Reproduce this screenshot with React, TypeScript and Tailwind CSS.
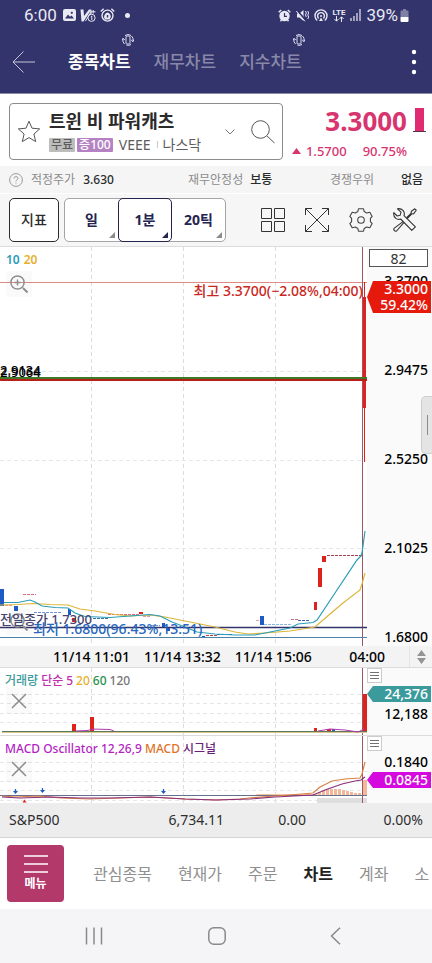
import type { ReactNode } from "react";

interface Candle {
    x: number;
    y: number;
    w: number;
    h: number;
    up: boolean;
}

const RED = "#dd231c";
const BLUE = "#1d5cc4";

const candles: Candle[] = [
    { x: 0, y: 589, w: 4, h: 17, up: false },
    { x: 14, y: 606, w: 4, h: 5, up: false },
    { x: 68, y: 609, w: 3, h: 6, up: false },
    { x: 72, y: 618, w: 4, h: 4, up: true },
    { x: 139, y: 612, w: 4, h: 2, up: true },
    { x: 162, y: 623, w: 3, h: 5, up: false },
    { x: 166, y: 627, w: 4, h: 4, up: false },
    { x: 202, y: 636, w: 3, h: 2, up: false },
    { x: 260, y: 616, w: 4, h: 9, up: false },
    { x: 314, y: 602, w: 3, h: 8, up: true },
    { x: 318, y: 568, w: 4, h: 19, up: true },
    { x: 322, y: 556, w: 4, h: 6, up: true },
    { x: 363, y: 297, w: 3, h: 111, up: true },
];

// 거래가 없는 구간 [x1, x2, y, color]
const flats: [number, number, number, string][] = [
    [23, 36, 594.5, "#d9707a"],
    [5, 13, 605.5, "#d9a0a0"],
    [34, 62, 612.5, "#6f92d8"],
    [93, 108, 618.5, "#35709f"],
    [108, 139, 614.5, "#d9707a"],
    [143, 150, 616.5, "#d9a0a0"],
    [151, 160, 625.5, "#6f92d8"],
    [206, 217, 635.5, "#b0404a"],
    [217, 232, 634.5, "#2a5aa5"],
    [256, 260, 620.5, "#e0a0a0"],
    [264, 291, 624.5, "#8ab8d8"],
    [291, 298, 619.5, "#c0708a"],
    [298, 309, 620.5, "#4060b0"],
    [327, 362, 555.5, "#a04050"],
];

const volumes: Candle[] = [
    { x: 72, y: 724, w: 4, h: 7, up: true },
    { x: 90, y: 717, w: 4, h: 14, up: true },
    { x: 314, y: 728, w: 3, h: 4, up: true },
    { x: 327, y: 729, w: 4, h: 3, up: true },
    { x: 332, y: 729, w: 3, h: 3, up: false },
    { x: 363, y: 694, w: 4, h: 39, up: true },
];

const oscillator = [1, 3, 5, 6, 6, 6, 6, 5, 4, 3, 2, 2];

const prices = ["3.3700", "2.9475", "2.5250", "2.1025", "1.6800"];

const subTabs = ["관심종목", "현재가", "주문", "차트", "계좌", "소"];

const Vertical = ({ top, bottom }: { top: number; bottom: number }) => (
    <path
        d={`M91.5 ${top}V${bottom}M183.5 ${top}V${bottom}M275.5 ${top}V${bottom}`}
        stroke="#dcdcdc"
        strokeDasharray="4 3"
        fill="none"
    />
);

const Rotate = () => (
    <svg width="12" height="12" viewBox="0 0 12 12" fill="none" stroke="#dcdcec" aria-hidden="true">
        <rect x="4" y="2" width="4" height="8" rx="1" />
        <path d="M2.5 10A5 5 0 0 1 1 5M3 1.5A5.4 5.4 0 0 1 9 1.5M9.5 2A5 5 0 0 1 11 7M9 10.5A5.4 5.4 0 0 1 4.5 11.2" />
        <path d="M0 6.5L1 4.2L2.8 6M12 5.5L11 7.8L9.2 6" />
    </svg>
);

const StatusBar = () => (
    <div className="flex h-[30px] items-center justify-between pl-6 pr-[23px] font-[Roboto,sans-serif] text-[17px] leading-none text-[#e9e9f4]">
        <div className="flex items-center gap-1">
            <span className="mr-[2px]">6:00</span>
            <svg width="13" height="12" viewBox="0 0 13 12" aria-hidden="true">
                <rect width="13" height="12" rx="2" fill="#e9e9f4" />
                <path d="M2 9.5L5 5.5L7 7.8L8.6 6.4L11 9.5Z" fill="#33346b" />
                <circle cx="8.8" cy="3.8" r="1.1" fill="#33346b" />
            </svg>
            <svg width="16" height="13" viewBox="0 0 16 13" fill="none" stroke="#e9e9f4" aria-hidden="true">
                <path d="M0.5 0.5H3.5L4 7L9 0.5H11.5L3.5 12.5H1.5Z" fill="#e9e9f4" stroke="none" />
                <path d="M5.5 12L11 3M11 1V5M13.2 1V4.5M10.5 2.8H15.5" />
                <circle cx="11.5" cy="8.8" r="3.6" />
                <path d="M10.8 7.8L11.8 7V11" />
            </svg>
            <svg width="15" height="14" viewBox="0 0 15 14" fill="none" stroke="#e9e9f4" strokeWidth="1.4" aria-hidden="true">
                <circle cx="7.5" cy="7.6" r="5.5" />
                <path d="M0.8 3.4L3.6 0.8M14.2 3.4L11.4 0.8" />
                <path d="M4 9Q4.5 5 7.5 4.4Q10.5 5 10.8 9L9.5 11.5H5Z" fill="#e9e9f4" stroke="none" />
                <path d="M7.5 7V9.5" stroke="#33346b" />
            </svg>
            <span className="ml-[6px] size-[5px] rounded-full bg-[#e9e9f4]" />
        </div>
        <div className="flex items-center gap-[5px]">
            <svg width="13" height="13" viewBox="0 0 13 13" aria-hidden="true">
                <circle cx="6.5" cy="7" r="5.2" fill="#e9e9f4" />
                <path d="M0.7 3.2L3.2 1M12.3 3.2L9.8 1M2.5 12.2L3.5 11M10.5 12.2L9.5 11" stroke="#e9e9f4" strokeWidth="1.5" />
                <path d="M6.5 4V7.4H9" fill="none" stroke="#33346b" strokeWidth="1.2" />
            </svg>
            <svg width="13" height="13" viewBox="0 0 13 13" aria-hidden="true">
                <path d="M1 4.5H3.5L7.5 1V12L3.5 8.5H1Z" fill="#e9e9f4" />
                <path d="M0.5 0.8L10 12" stroke="#33346b" strokeWidth="2" />
                <path d="M0.3 2L9 12.3M9.5 2L10.3 4L9.5 6L10.3 8M11.8 2L12.6 4L11.8 6L12.6 8L11.8 10" fill="none" stroke="#e9e9f4" />
            </svg>
            <svg width="14" height="13" viewBox="0 0 14 13" fill="none" stroke="#e9e9f4" strokeWidth="1.4" aria-hidden="true">
                <path d="M3.2 11.5A6 6 0 1 1 10.8 11.5M4.6 9.4A3.4 3.4 0 1 1 9.4 9.4" />
                <circle cx="7" cy="7" r="1" fill="#e9e9f4" stroke="none" />
                <path d="M5 12L7 8.6L9 12Z" fill="#e9e9f4" stroke="none" />
            </svg>
            <span className="flex flex-col items-center text-[8px] font-bold leading-[7px]">
                LTE
                <svg width="10" height="6" viewBox="0 0 10 6" fill="none" stroke="#e9e9f4" aria-hidden="true">
                    <path d="M2.5 0V5M0.5 3L2.5 5.2L4.5 3M7.5 6V1M5.5 3L7.5 0.8L9.5 3" />
                </svg>
            </span>
            <svg width="11" height="12" viewBox="0 0 11 12" stroke="#e9e9f4" strokeWidth="1.2" aria-hidden="true">
                <path d="M1 9V12M4 7V12M7 4V12M10 0V12" />
            </svg>
            <span className="flex items-center gap-[2px]">
                39%
                <svg width="9" height="13" viewBox="0 0 9 13" aria-hidden="true">
                    <path d="M3 0H6V1.5H7.5Q8.5 1.5 8.5 2.5V8H0.5V2.5Q0.5 1.5 1.5 1.5H3Z" fill="#8080a6" />
                    <path d="M0.5 8H8.5V12Q8.5 13 7.5 13H1.5Q0.5 13 0.5 12Z" fill="#ffffff" />
                </svg>
            </span>
        </div>
    </div>
);

const Header = () => (
    <header className="border-b border-[#8a8aa5] bg-[#33346b]">
        <StatusBar />
        <nav className="flex h-[63px] items-center pl-3 pr-[15px] text-[17px] font-medium leading-6 text-[#8988a8]">
            <button aria-label="뒤로" className="mr-[33px]">
                <svg width="23" height="22" viewBox="0 0 23 22" fill="none" stroke="#c4c4d8" aria-hidden="true">
                    <path d="M11.5 0.5L1 11L11.5 21.5M1 11H23" />
                </svg>
            </button>
            <button className="relative mr-[23px] font-bold text-white">
                종목차트
                <span className="absolute -right-[3px] -top-4"><Rotate /></span>
            </button>
            <button className="mr-[23px]">재무차트</button>
            <button className="relative">
                지수차트
                <span className="absolute -right-[3px] -top-4"><Rotate /></span>
            </button>
            <button aria-label="더보기" className="ml-auto">
                <svg width="6" height="26" viewBox="0 0 6 26" fill="#ffffff" aria-hidden="true">
                    <circle cx="3" cy="3" r="2.2" />
                    <circle cx="3" cy="13" r="2.2" />
                    <circle cx="3" cy="23" r="2.2" />
                </svg>
            </button>
        </nav>
    </header>
);

const Quote = () => (
    <section className="flex justify-between bg-white pb-[3px] pl-[9px] pr-[6px] pt-[9px]">
        <div className="flex h-[57px] w-[274px] items-center rounded-[4px] border border-[#8c8c8c] px-[7px]">
            <button aria-label="관심종목 등록">
                <svg width="24" height="23" viewBox="0 0 23 23" fill="none" stroke="#555555" aria-hidden="true">
                    <path d="M11.5 1.2L14.5 8.2L22.2 8.9L16.4 14L18.2 21.6L11.5 17.6L4.8 21.6L6.6 14L0.8 8.9L8.5 8.2Z" />
                </svg>
            </button>
            <div className="ml-2 flex flex-col gap-[2px]">
                <h1 className="text-lg font-bold leading-6 text-[#2b2b2b]">트윈 비 파워캐츠</h1>
                <div className="flex items-center text-sm leading-5 text-[#5c5c5c]">
                    <span className="mr-[2px] rounded-[1px] bg-[#bdbdbd] px-[2px] text-xs font-medium leading-[14px] text-[#5c5c5c]">무료</span>
                    <span className="mr-[6px] rounded-[1px] bg-[#b583c4] px-[2px] text-xs font-medium leading-[14px] text-white">증100</span>
                    VEEE
                    <span className="ml-[6px] mr-[5px] h-[7px] w-px bg-[#c8c8c8]" />
                    나스닥
                </div>
            </div>
            <button aria-label="종목 목록" className="ml-auto mr-4">
                <svg width="10" height="6" viewBox="0 0 10 6" fill="none" stroke="#777777" aria-hidden="true">
                    <path d="M0.5 0.5L5 5L9.5 0.5" />
                </svg>
            </button>
            <button aria-label="검색">
                <svg width="24" height="24" viewBox="0 0 24 24" fill="none" stroke="#555555" aria-hidden="true">
                    <circle cx="9.5" cy="9.5" r="8.8" />
                    <path d="M16 16L23.5 23" />
                </svg>
            </button>
        </div>
        <div className="flex gap-[6px] text-[#d8346f]">
            <div className="flex flex-col items-end">
                <strong className="text-[26px] font-bold leading-9">3.3000</strong>
                <div className="flex items-center text-[13px] font-medium leading-6">
                    <svg width="9" height="6" viewBox="0 0 9 6" fill="#d8346f" aria-hidden="true" className="mr-[5px]">
                        <path d="M4.5 0L9 6H0Z" />
                    </svg>
                    <span className="mr-4">1.5700</span>
                    <span>90.75%</span>
                </div>
            </div>
            <svg width="13" height="25" viewBox="0 0 13 25" aria-hidden="true" className="mt-[5px]">
                <path d="M2 0H11V23H2Z" fill="#e02b72" />
                <path d="M0 23.5H13" stroke="#55334a" />
            </svg>
        </div>
    </section>
);

const Facts = () => (
    <dl className="grid h-[27px] grid-cols-[179fr_142fr_93fr] items-center bg-[#f5f5f6] px-[9px] text-xs leading-5 text-[#2b2b2b]">
        <div className="flex gap-2">
            <dt className="flex items-center gap-2 text-[#8c8c8c]">
                <svg width="14" height="14" viewBox="0 0 14 14" fill="none" stroke="#9a9a9a" aria-hidden="true">
                    <circle cx="7" cy="7" r="6.4" />
                    <path d="M5 5.5Q5 3.6 7 3.6Q9 3.6 9 5.3Q9 6.3 7.8 6.9Q7 7.3 7 8.4M7 9.6V10.6" />
                </svg>
                적정주가
            </dt>
            <dd className="font-medium">3.630</dd>
        </div>
        <div className="flex gap-[7px]">
            <dt className="text-[#8c8c8c]">재무안정성</dt>
            <dd className="font-medium">보통</dd>
        </div>
        <div className="flex justify-between">
            <dt className="text-[#8c8c8c]">경쟁우위</dt>
            <dd className="font-medium">없음</dd>
        </div>
    </dl>
);

const Corner = ({ color }: { color: string }) => (
    <svg width="6" height="6" viewBox="0 0 6 6" fill={color} aria-hidden="true" className="absolute bottom-[3px] right-[3px]">
        <path d="M6 0V6H0Z" />
    </svg>
);

const Toolbar = () => (
    <div className="flex h-[54px] items-center justify-between border-b border-t border-b-[#dcdcdc] border-t-white bg-[#f6f6f7] pl-[9px] pr-[15px] text-sm leading-5">
        <div className="flex">
            <button className="mr-[5px] h-11 w-[50px] rounded-[5px] border border-[#2b2b2b] bg-white font-medium text-[#2b2b2b]">지표</button>
            <div className="flex h-11 rounded-[5px] border border-[#a5a5a5] bg-white font-bold text-[#23244f]">
                <button className="relative w-[53px]">일<Corner color="#8c8c8c" /></button>
                <button className="relative -my-px w-[54px] rounded-[5px] border border-[#23244f]">1분<Corner color="#23244f" /></button>
                <button className="relative w-[53px]">20틱<Corner color="#8c8c8c" /></button>
            </div>
        </div>
        <div className="flex items-center gap-5">
            <button aria-label="분할 화면">
                <svg width="24" height="24" viewBox="0 0 24 24" fill="none" stroke="#333333" aria-hidden="true">
                    <path d="M0.5 0.5H10.5V10.5H0.5ZM13.5 0.5H23.5V10.5H13.5ZM0.5 13.5H10.5V23.5H0.5ZM13.5 13.5H23.5V23.5H13.5Z" />
                </svg>
            </button>
            <button aria-label="전체 화면">
                <svg width="24" height="24" viewBox="0 0 24 24" fill="none" stroke="#333333" aria-hidden="true">
                    <path d="M0.5 0.5L23.5 23.5M23.5 0.5L0.5 23.5M0.5 7V0.5H7M17 0.5H23.5V7M23.5 17V23.5H17M7 23.5H0.5V17" />
                </svg>
            </button>
            <button aria-label="설정">
                <svg width="24" height="24" viewBox="0 0 24 24" fill="none" stroke="#444444" strokeWidth="1.1" strokeLinejoin="round" aria-hidden="true">
                    <path d="M9.5 0.8H14.5L15.2 3.6L17.6 5L20.8 4.2L23.2 8.4L21.4 10.4V13.6L23.2 15.6L20.8 19.8L17.6 19L15.2 20.4L14.5 23.2H9.5L8.8 20.4L6.4 19L3.2 19.8L0.8 15.6L2.6 13.6V10.4L0.8 8.4L3.2 4.2L6.4 5L8.8 3.6Z" />
                    <circle cx="12" cy="12" r="3.3" />
                </svg>
            </button>
            <button aria-label="도구">
                <svg width="24" height="24" viewBox="0 0 24 24" fill="none" stroke="#333333" strokeWidth="1.1" strokeLinejoin="round" aria-hidden="true">
                    <path d="M4.5 0.8L8 4.2L7.2 7.2L4.2 8L0.8 4.6Q0.2 8.2 2.8 10.4Q5 12 7.6 11L18.8 22.4L22.4 18.8L11 7.6Q12 4.6 10 2.4Q7.8 0.2 4.5 0.8Z" />
                    <path d="M13.4 10L18 5.4L18.4 3.2L21.8 0.8L23.2 2.2L20.8 5.6L18.6 6L14.2 10.6M10 13.6L1 20.4Q0.4 21.6 1.4 22.6Q2.4 23.6 3.6 23L10.8 14.6" />
                </svg>
            </button>
        </div>
    </div>
);

const Magnifier = ({ plus }: { plus: boolean }) => (
    <svg width="18" height="18" viewBox="0 0 18 18" fill="none" stroke="#8f8f8f" strokeWidth="1.5" aria-hidden="true">
        <circle cx="7.5" cy="7.5" r="6.6" />
        <path d="M13 13L17.5 17.5" strokeWidth="2" />
        <path d={plus ? "M7.5 4.5V10.5M4.5 7.5H10.5" : "M4.5 7.5H10.5"} />
    </svg>
);

const PricePanel = () => (
    <div className="flex h-[399px]">
        <div className="relative min-w-0 flex-1 bg-white">
            <svg viewBox="0 247 367 399" preserveAspectRatio="none" className="h-full w-full" aria-hidden="true">
                <Vertical top={247} bottom={646} />
                <path d="M0 371.5H367M0 460.5H367M0 548.5H367" stroke="#e6e6e6" strokeDasharray="4 3" />
                <path d="M0 282.5H367" stroke="#e08a86" />
                <path d="M362.5 247V646" stroke="#a25560" />
                <path d="M364.5 282V462" stroke={RED} />
                {flats.map(([x1, x2, y, color]) => (
                    <path key={x1} d={`M${x1} ${y}H${x2}`} stroke={color} strokeDasharray="3 1" />
                ))}
                {candles.map((c) => (
                    <rect key={c.x} x={c.x} y={c.y} width={c.w} height={c.h} fill={c.up ? RED : BLUE} />
                ))}
                <path d="M0 627.5H367" stroke="#33346b" strokeWidth="1.5" />
                <path d="M0 637.5H367" stroke="#4d83a6" />
                <polyline
                    points="0,605 18,604.5 33,603.5 50,604.5 68,605 80,609 95,611 115,614.5 130,616 150,615 165,617 185,621 215,627 235,632 248,634 265,633 290,631 315,627 330,614 343,603 360,590 362,584 365,573"
                    fill="none"
                    stroke="#dcb53a"
                    strokeWidth="1.2"
                />
                <polyline
                    points="4,602.5 18,602.5 30,600 35,602 42,606 55,607.5 68,608 75,613 85,616.5 110,617.5 150,614.5 160,616 172,622 185,627 197,632 215,634 235,635 255,635 275,631 290,628 298,624 313,622.5 317,620 335,593 357,560 361,556 362,553 365,531"
                    fill="none"
                    stroke="#2a9db8"
                    strokeWidth="1.2"
                />
                <path d="M0 378H367" stroke="#3d7a2c" strokeWidth="2" />
                <path d="M0 380H367" stroke="#b81f17" strokeWidth="2" />
            </svg>
            <div className="absolute left-[6px] top-1 flex gap-1 text-xs font-semibold leading-[18px]">
                <span className="text-[#2a9db8]">10</span>
                <span className="text-[#e6b02e]">20</span>
            </div>
            <button aria-label="확대" className="absolute left-[6px] top-6 flex size-[26px] items-center justify-center bg-black/2">
                <Magnifier plus />
            </button>
            <button aria-label="축소" className="absolute bottom-[11px] left-[6px] flex size-[26px] items-center justify-center bg-black/2">
                <Magnifier plus={false} />
            </button>
            <span className="absolute right-1 top-[34px] whitespace-nowrap text-sm font-medium leading-5 text-[#cc2620]">최고 3.3700(−2.08%,04:00)</span>
            <span className="absolute left-0 top-[113px] text-[13px] font-medium leading-5 text-black">2.9134</span>
            <span className="absolute left-0 top-[115px] text-[13px] font-medium leading-5 text-black">2.9064</span>
            <span className="absolute bottom-[17px] left-0 whitespace-nowrap text-[13px] font-medium leading-5 text-[#45456f]">전일종가 1.7300</span>
            <span className="absolute bottom-[7px] left-[33px] whitespace-nowrap text-sm font-medium leading-5 text-[#2867bd]">최저 1.6800(96.43%,13:51)</span>
        </div>
        <div className="relative flex w-[65px] flex-col bg-[#fafafa] pr-1 text-right text-sm font-medium text-black">
            <input
                aria-label="봉 개수"
                defaultValue="82"
                className="ml-[2px] mt-[2px] h-[18px] w-[59px] shrink-0 border border-[#555555] bg-white text-center text-sm font-normal leading-4 text-[#333333]"
            />
            <div className="mt-[5px] flex flex-1 flex-col justify-between leading-[18px]">
                {prices.map((price) => (
                    <span key={price}>{price}</span>
                ))}
            </div>
            <div className="absolute right-px top-[34px] flex h-8 w-16 flex-col bg-[#e51a0d] pr-[3px] leading-4 text-white [clip-path:polygon(0_50%,6px_0,100%_0,100%_100%,6px_100%)]">
                <span>3.3000</span>
                <span>59.42%</span>
            </div>
            <button aria-label="패널 열기" className="absolute right-0 top-[149px] flex h-[58px] w-[11px] items-center justify-center rounded-l-[5px] border border-r-0 border-[#cfcfcf] bg-[#e4e4e4]">
                <span className="h-5 w-px bg-[#8c8c8c]" />
            </button>
        </div>
    </div>
);

const TimeAxis = () => (
    <div className="flex h-[21px] items-center bg-[#f3f3f3] pl-[53px] text-sm font-medium leading-5 text-black">
        <div className="flex gap-[14px] whitespace-nowrap">
            <span>11/14 11:01</span>
            <span>11/14 13:32</span>
            <span>11/14 15:06</span>
        </div>
        <span className="ml-auto mr-6">04:00</span>
        <button aria-label="차트 높이 조절" className="flex h-full w-[23px] items-center justify-center border-l border-[#e4e4e4]">
            <svg width="9" height="14" viewBox="0 0 9 14" fill="#949494" aria-hidden="true">
                <path d="M4.5 0L9 6H0ZM4.5 14L9 8H0Z" />
            </svg>
        </button>
    </div>
);

interface SubPanelProps {
    legend: ReactNode;
    drawing: ReactNode;
    children: ReactNode;
}

const SubPanel = ({ legend, drawing, children }: SubPanelProps) => (
    <div className="flex h-[68px] border-t border-[#dcdcdc]">
        <div className="relative min-w-0 flex-1 bg-white">
            {drawing}
            <div className="absolute left-[5px] top-1 flex gap-[3px] whitespace-nowrap text-xs font-medium leading-[18px]">{legend}</div>
            <button aria-label="지표 삭제" className="absolute left-[6px] top-5 flex size-[26px] items-center justify-center bg-black/2">
                <svg width="16" height="16" viewBox="0 0 16 16" stroke="#8c8c8c" strokeWidth="1.5" aria-hidden="true">
                    <path d="M1 1L15 15M15 1L1 15" />
                </svg>
            </button>
        </div>
        <div className="flex w-[65px] flex-col bg-[#fafafa] text-right text-sm font-medium text-black">
            <button aria-label="지표 메뉴" className="flex size-[15px] shrink-0 items-center justify-center border border-[#cccccc] bg-white">
                <svg width="9" height="9" viewBox="0 0 9 9" stroke="#707070" aria-hidden="true">
                    <path d="M0 1.5H9M0 4.5H9M0 7.5H9" />
                </svg>
            </button>
            {children}
        </div>
    </div>
);

const Tag = ({ className, children }: { className: string; children: ReactNode }) => (
    <span className={`mr-px h-4 pr-[3px] leading-4 text-white [clip-path:polygon(0_50%,6px_0,100%_0,100%_100%,6px_100%)] ${className}`}>
        {children}
    </span>
);

const VolumePanel = () => (
    <SubPanel
        legend={
            <>
                <span className="text-[#3b9a9b]">거래량</span>
                <span className="text-[#c22fb0]">단순</span>
                <span className="text-[#c22fb0]">5</span>
                <span className="text-[#e6b02e]">20</span>
                <span className="text-[#1f8f4a]">60</span>
                <span className="text-[#757575]">120</span>
            </>
        }
        drawing={
            <svg viewBox="0 668 367 67" preserveAspectRatio="none" className="h-full w-full" aria-hidden="true">
                <Vertical top={668} bottom={735} />
                <path d="M0 694.5H367M0 703.5H367M0 713.5H367M0 722.5H367" stroke="#e6e6e6" strokeDasharray="4 3" />
                <path d="M362.5 668V735" stroke="#a25560" />
                {volumes.map((v) => (
                    <rect key={v.x} x={v.x} y={v.y} width={v.w} height={v.h} fill={v.up ? RED : BLUE} />
                ))}
                <path d="M2 732.5H367" stroke="#d8c690" />
                <path d="M2 731.5H367" stroke="#5f7a5a" />
                <path d="M76 731L88 730.5L92 729L110 729.5L114 731M318 731L330 729L345 730L358 732L364 729" fill="none" stroke="#b03ab0" />
            </svg>
        }
    >
        <Tag className="mt-[3px] bg-[#3b9a9b]">24,376</Tag>
        <span className="mt-[2px] pr-1 leading-5">12,188</span>
    </SubPanel>
);

const MacdPanel = () => (
    <SubPanel
        legend={
            <>
                <span className="text-[#b41fc4]">MACD Oscillator 12,26,9</span>
                <span className="text-[#e0731f]">MACD</span>
                <span className="text-[#6b1f78]">시그널</span>
            </>
        }
        drawing={
            <svg viewBox="0 736 367 67" preserveAspectRatio="none" className="h-full w-full" aria-hidden="true">
                <Vertical top={736} bottom={803} />
                <path d="M0 762.5H367M0 771.5H367M0 781.5H367M0 790.5H367M0 800.5H367" stroke="#e6e6e6" strokeDasharray="4 3" />
                <rect x="317" y="798" width="50" height="5" fill="#dedede" />
                <path d="M256 795H314" stroke="#f3c3a8" strokeWidth="2" />
                {oscillator.map((h, i) => (
                    <rect key={i} x={314 + i * 4} y={795 - h} width={3} height={h} fill="#f5b79a" />
                ))}
                <rect x="363" y="780" width="4" height="15" fill="#f5b79a" />
                <path d="M362.5 736V803" stroke="#a25560" />
                <path d="M0 795.5H367" stroke="#66708c" />
                <polyline
                    points="2,796 15,797 40,796 60,798 90,799 150,797 185,799 216,800 240,799 260,797 290,795 313,793 320,787 332,781 345,779 360,778 362,774 365,762"
                    fill="none"
                    stroke="#d98040"
                    strokeWidth="1.2"
                />
                <polyline
                    points="2,797 20,798 50,797 80,798 110,798 150,797 185,799 216,800 250,799 275,797 313,795 325,790 342,784 355,781 361,780 365,777"
                    fill="none"
                    stroke="#8a2f7a"
                    strokeWidth="1.2"
                />
                <path d="M15.5 789V793M42.5 788V792M163.5 789V793" stroke={BLUE} strokeWidth="1.2" />
                <path d="M13 791H18L15.5 794ZM40 790H45L42.5 793ZM161 791H166L163.5 794Z" fill={BLUE} />
                <path d="M22.5 802.5L24.5 799.5L26.5 802.5Z" fill={RED} />
            </svg>
        }
    >
        <span className="mt-px pr-1 leading-5">0.1840</span>
        <Tag className="bg-[#d40ade]">0.0845</Tag>
    </SubPanel>
);

const IndexTicker = () => (
    <div className="grid h-[35px] grid-cols-[1fr_1fr_82px_117px] items-center border-b border-[#d4d4d4] bg-[#ededed] px-[9px] text-right text-sm leading-5 text-[#2e2e2e]">
        <span className="text-left">S&amp;P500</span>
        <span>6,734.11</span>
        <span>0.00</span>
        <span>0.00%</span>
    </div>
);

const BottomMenu = () => (
    <nav className="flex h-[71px] items-center overflow-hidden whitespace-nowrap bg-white pl-[7px] text-base leading-6 text-[#8f8f8f]">
        <button className="mr-[29px] flex size-[57px] shrink-0 flex-col items-center justify-center gap-[2px] rounded-[4px] bg-[#b3396b] text-xs font-bold leading-[18px] text-white">
            <svg width="24" height="18" viewBox="0 0 24 18" stroke="#ffffff" strokeWidth="1.6" aria-hidden="true">
                <path d="M0 1H24M0 9H24M0 17H24" />
            </svg>
            메뉴
        </button>
        <div className="flex gap-[26px]">
            {subTabs.map((tab) => (
                <button key={tab} className={tab === "차트" ? "font-bold text-[#222222]" : ""}>{tab}</button>
            ))}
        </div>
    </nav>
);

const SystemNav = () => (
    <div className="flex h-[54px] items-center justify-between bg-[#f5f5f8] pl-[85px] pr-[91px]">
        <button aria-label="최근 앱">
            <svg width="18" height="18" viewBox="0 0 18 18" stroke="#8a8a8c" strokeWidth="1.5" aria-hidden="true">
                <path d="M1.5 0.5V17.5M9 0.5V17.5M16.5 0.5V17.5" />
            </svg>
        </button>
        <button aria-label="홈">
            <svg width="18" height="18" viewBox="0 0 18 18" fill="none" stroke="#8a8a8c" strokeWidth="1.5" aria-hidden="true">
                <rect x="0.8" y="0.8" width="16.4" height="16.4" rx="5" />
            </svg>
        </button>
        <button aria-label="이전">
            <svg width="11" height="18" viewBox="0 0 11 18" fill="none" stroke="#8a8a8c" strokeWidth="1.5" aria-hidden="true">
                <path d="M10 0.8L1.5 9L10 17.2" />
            </svg>
        </button>
    </div>
);

const App = () => {
    return (
        <main className="w-full bg-white font-['Noto_Sans','Noto_Sans_CJK_KR',sans-serif]">
            <Header />
            <Quote />
            <Facts />
            <Toolbar />
            <PricePanel />
            <TimeAxis />
            <VolumePanel />
            <MacdPanel />
            <IndexTicker />
            <BottomMenu />
            <SystemNav />
        </main>
    );
};

export default App;
